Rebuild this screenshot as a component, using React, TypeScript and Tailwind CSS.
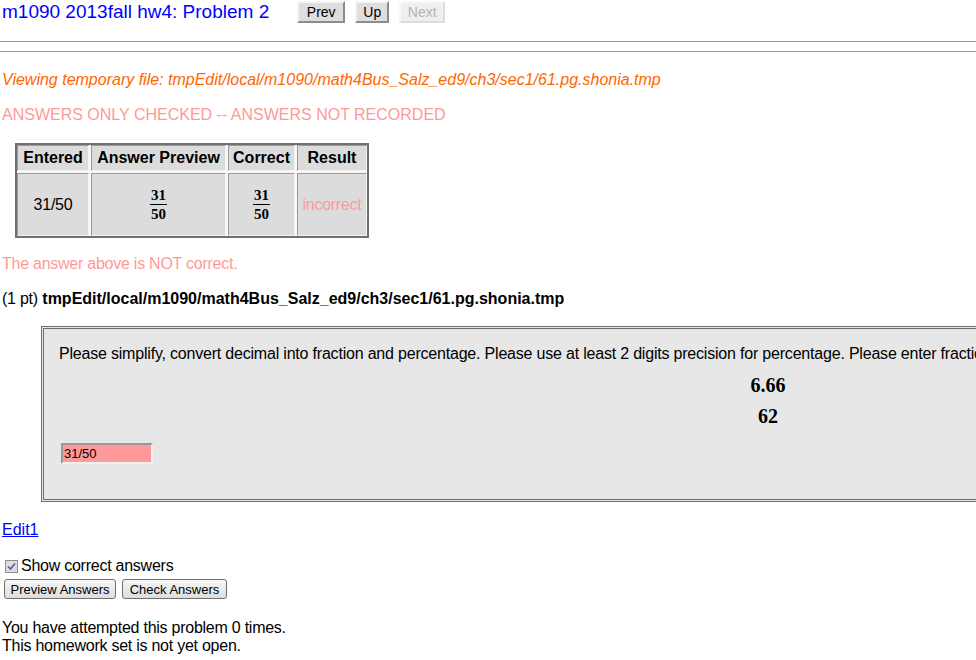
import React from 'react';

const Frac: React.FC<{ num: string; den: string }> = ({ num, den }) => (
  <span className="inline-flex flex-col items-center font-['Liberation_Serif',serif] font-bold text-[15px] leading-[14px]">
    <span className="px-[1px]">{num}</span>
    <span className="w-full h-px bg-black my-[2px]"></span>
    <span className="px-[1px]">{den}</span>
  </span>
);

const NavButton: React.FC<{ label: string; disabled?: boolean; w: string }> = ({ label, disabled, w }) => (
  <button
    className={
      disabled
        ? `${w} h-[22px] text-[14px] leading-none text-[#b4b4b4] bg-[#efefef] border-2 border-t-[#f8f8f8] border-l-[#f8f8f8] border-b-[#dcdcdc] border-r-[#dcdcdc]`
        : `${w} h-[22px] text-[14px] leading-none text-black bg-[#dedede] border-2 border-t-[#f4f4f4] border-l-[#f4f4f4] border-b-[#8c8c8c] border-r-[#8c8c8c]`
    }
  >
    {label}
  </button>
);

const FormButton: React.FC<{ label: string; w: string }> = ({ label, w }) => (
  <button className={`${w} h-[20px] text-[13px] leading-none text-black rounded-[3px] border border-[#707070] bg-gradient-to-b from-[#f6f6f6] to-[#dddddd]`}>
    {label}
  </button>
);

const cell = 'bg-[#dcdcdc] border border-t-[#9a9a9a] border-l-[#9a9a9a] border-b-[#f4f4f4] border-r-[#f4f4f4] flex items-center justify-center';

export default function App() {
  return (
    <div className="w-[976px] h-[660px] overflow-hidden bg-white text-black font-['Liberation_Sans',Arial,sans-serif] text-[16px] leading-[18px]">
      {/* header */}
      <div className="flex items-center h-[24px]">
        <span className="ml-[2px] text-[19px] leading-[22px] text-[#0000ff]">m1090 2013fall hw4: Problem 2</span>
        <div className="ml-[28px] flex gap-[10px]">
          <NavButton label="Prev" w="w-[48px]" />
          <NavButton label="Up" w="w-[34px]" />
          <NavButton label="Next" w="w-[46px]" disabled />
        </div>
      </div>
      <div className="mt-[17px] h-px bg-[#9a9a9a]"></div>
      <div className="mt-[9px] h-px bg-[#9a9a9a]"></div>

      <div className="mt-[19px] ml-[2px] italic text-[#ff6600]">
        Viewing temporary file: tmpEdit/local/m1090/math4Bus_Salz_ed9/ch3/sec1/61.pg.shonia.tmp
      </div>
      <div className="mt-[17px] ml-[2px] text-[#ff9999]">ANSWERS ONLY CHECKED -- ANSWERS NOT RECORDED</div>

      {/* results table */}
      <div className="mt-[19px] ml-[15px] w-fit grid grid-cols-[72px_135px_67px_70px] grid-rows-[26px_63px] gap-[2px] bg-[#f8f8f8] border-2 border-[#707070]">
        <div className={`${cell} font-bold`}>Entered</div>
        <div className={`${cell} font-bold`}>Answer Preview</div>
        <div className={`${cell} font-bold`}>Correct</div>
        <div className={`${cell} font-bold`}>Result</div>
        <div className={`${cell} tracking-[-0.25px]`}>31/50</div>
        <div className={cell}><Frac num="31" den="50" /></div>
        <div className={cell}><Frac num="31" den="50" /></div>
        <div className={`${cell} text-[#ff9999] tracking-[-0.25px]`}>incorrect</div>
      </div>

      <div className="mt-[17px] ml-[2px] text-[#ff9999] tracking-[-0.25px]">The answer above is NOT correct.</div>
      <div className="mt-[17px] ml-[2px]">
        <span className="tracking-[-0.25px]">(1 pt)</span> <span className="font-bold">tmpEdit/local/m1090/math4Bus_Salz_ed9/ch3/sec1/61.pg.shonia.tmp</span>
      </div>

      {/* problem box */}
      <div className="mt-[18px] ml-[41px] w-[1454px] h-[176px] border-[3px] border-double border-[#6e6e6e] bg-[#e7e7e7] pt-[16px] px-[15px]">
        <p className="tracking-[-0.2px]">
          Please simplify, convert decimal into fraction and percentage. Please use at least 2 digits precision for percentage. Please enter fractions in the form a/b.
        </p>
        <div className="mt-[11px] text-center font-['Liberation_Serif',serif] font-bold text-[20px] leading-[22px]">6.66</div>
        <div className="mt-[9px] text-center font-['Liberation_Serif',serif] font-bold text-[20px] leading-[22px]">62</div>
        <div className="mt-[16px] ml-[2px] w-[92px] h-[21px] bg-[#ff9999] border-2 border-t-[#999999] border-l-[#999999] border-b-[#f0f0f0] border-r-[#f0f0f0] text-[13px] leading-[17px] pl-[1px]">
          31/50
        </div>
      </div>

      <div className="mt-[19px] ml-[2px]">
        <a href="#" className="text-[#0000ff] underline">Edit1</a>
      </div>

      <div className="mt-[18px] ml-[5px] flex items-center">
        <span className="w-[13px] h-[13px] border border-[#8f8f8f] bg-[#dcdcdc] flex items-center justify-center">
          <svg width="9" height="9" viewBox="0 0 9 9">
            <path d="M1 4.5 L3.5 7 L8 1.5" fill="none" stroke="#4a5e9a" strokeWidth="1.6" />
          </svg>
        </span>
        <span className="ml-[3px] tracking-[-0.25px]">Show correct answers</span>
      </div>
      <div className="mt-[4px] ml-[4px] flex gap-[6px]">
        <FormButton label="Preview Answers" w="w-[112px]" />
        <FormButton label="Check Answers" w="w-[105px]" />
      </div>

      <div className="mt-[20px] ml-[2px] tracking-[-0.25px]">
        <div>You have attempted this problem 0 times.</div>
        <div>This homework set is not yet open.</div>
      </div>
    </div>
  );
}
